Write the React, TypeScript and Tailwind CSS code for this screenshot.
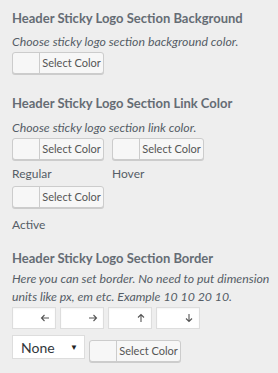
const font = { fontFamily: 'Lato, "Noto Sans", sans-serif' };

const ColorButton = ({ className = '' }: { className?: string }) => (
  <button
    className={`flex h-[22px] w-[92px] items-stretch rounded-[3px] border border-[#ccc] bg-[#f7f7f7] shadow-[0_1px_0_#ccc] ${className}`}
  >
    <span className="w-[27px] border-r border-[#ccc]" />
    <span className="flex flex-1 items-center justify-center text-[11px] text-[#555]">Select Color</span>
  </button>
);

const Title = ({ children, className = '' }: { children: string; className?: string }) => (
  <h3 className={`whitespace-nowrap text-[13px] font-bold leading-[18px] text-[#656c74] ${className}`}>{children}</h3>
);

const Desc = ({ children, className = '' }: { children: React.ReactNode; className?: string }) => (
  <p className={`whitespace-nowrap text-[12.3px] italic leading-[18px] text-[#555d66] ${className}`}>{children}</p>
);

const Label = ({ children, className = '' }: { children: string; className?: string }) => (
  <div className={`text-[12px] leading-[18px] text-[#555d66] ${className}`}>{children}</div>
);

// small thin arrow, rotated per direction
const Arrow = ({ rotate }: { rotate: string }) => (
  <svg width="10" height="10" viewBox="0 0 10 10" className={rotate} fill="none" stroke="#555" strokeWidth="1.1">
    <path d="M9 5H1.5M4.5 2L1.5 5l3 3" />
  </svg>
);

const DimInput = ({ rotate }: { rotate: string }) => (
  <div className="flex h-[22px] w-[44px] items-center justify-end border border-[#ddd] bg-white pr-[5px] shadow-[inset_0_1px_2px_rgba(0,0,0,0.05)]">
    <Arrow rotate={rotate} />
  </div>
);

export default function App() {
  return (
    <div className="h-[373px] w-[278px] overflow-hidden bg-[#eeeeee] px-[12px] pt-[9px]" style={font}>
      <Title>Header Sticky Logo Section Background</Title>
      <Desc className="mt-[6px]">Choose sticky logo section background color.</Desc>
      <ColorButton className="mt-[1px]" />

      <Title className="mt-[20px]">Header Sticky Logo Section Link Color</Title>
      <Desc className="mt-[7px]">Choose sticky logo section link color.</Desc>
      <div className="mt-[1px] flex gap-[8px]">
        <div className="w-[92px]">
          <ColorButton />
          <Label className="mt-[5px]">Regular</Label>
        </div>
        <div className="w-[92px]">
          <ColorButton />
          <Label className="mt-[5px]">Hover</Label>
        </div>
      </div>
      <ColorButton className="mt-[3px]" />
      <Label className="mt-[8px]">Active</Label>

      <Title className="mt-[15px]">Header Sticky Logo Section Border</Title>
      <Desc className="mt-[3px]">
        Here you can set border. No need to put dimension
        <br />
        units like px, em etc. Example 10 10 20 10.
      </Desc>
      <div className="mt-[1px] flex gap-[4px]">
        <DimInput rotate="" />
        <DimInput rotate="rotate-180" />
        <DimInput rotate="rotate-90" />
        <DimInput rotate="-rotate-90" />
      </div>
      <div className="mt-[6px] flex items-start gap-[4px]">
        <div className="flex h-[24px] w-[73px] items-center justify-between border border-[#ddd] bg-white pl-[8px] pr-[6px]">
          <span className="text-[14px] text-[#32373c]">None</span>
          <span className="text-[8px] text-[#222]">▼</span>
        </div>
        <ColorButton className="mt-[5px]" />
      </div>
    </div>
  );
}
